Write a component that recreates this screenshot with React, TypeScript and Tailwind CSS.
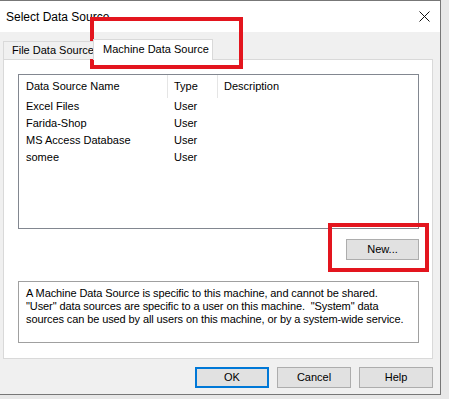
import React from "react";

const rows = [
	{ name: "Excel Files", type: "User" },
	{ name: "Farida-Shop", type: "User" },
	{ name: "MS Access Database", type: "User" },
	{ name: "somee", type: "User" },
];

const DialogButton = ({ label, primary }: { label: string; primary?: boolean }) => (
	<button
		className={
			primary
				? "w-[74px] h-[21px] bg-[#e1e1e1] border-2 border-[#0078d7] text-black leading-none"
				: "w-[74px] h-[21px] bg-[#e1e1e1] border border-[#adadad] text-black leading-none"
		}
	>
		{label}
	</button>
);

export default function App() {
	return (
		<div className="w-[449px] h-[399px] bg-[#e8e8e8] overflow-hidden font-['Liberation_Sans',Arial,sans-serif] text-[11px] text-black whitespace-nowrap">
			<div className="relative w-[441px] h-[395px] bg-[#f0f0f0] border-t border-r border-b border-[#777777] flex flex-col">
				{/* Title bar */}
				<div className="h-[31px] bg-white flex items-center justify-between pl-[6px] pr-[9px]">
					<span className="text-[12px]">Select Data Source</span>
					<svg width="11" height="11" viewBox="0 0 11 11" className="mr-[1px]">
						<path d="M0.5 0.5 L10.5 10.5 M10.5 0.5 L0.5 10.5" stroke="#111" strokeWidth="1" />
					</svg>
				</div>

				{/* Body */}
				<div className="flex-1 flex flex-col pl-[3px] pr-[7px] pt-[6px]">
					{/* Tabs */}
					<div className="flex items-end h-[21px] relative z-10">
						<div className="w-[90px] h-[18px] bg-[#f0f0f0] border-t border-l border-[#d9d9d9] flex items-center pl-[8px]">
							File Data Source
						</div>
						<div className="w-[120px] h-[21px] bg-white border-t border-l border-r border-[#d9d9d9] flex items-center pl-[9px] -mb-px pb-[2px]">
							Machine Data Source
						</div>
					</div>

					{/* Tab panel */}
					<div className="w-[430px] h-[300px] bg-white border border-[#d9d9d9] flex flex-col pl-[14px] pt-[14px]">
						{/* List view */}
						<div className="w-[401px] h-[155px] border border-[#828790] bg-white flex flex-col">
							<div className="flex h-[23px] items-center">
								<div className="w-[149px] h-full flex items-center pl-[7px] border-r border-[#e5e5e5]">
									Data Source Name
								</div>
								<div className="w-[50px] h-full flex items-center pl-[6px] border-r border-[#e5e5e5]">
									Type
								</div>
								<div className="flex-1 h-full flex items-center pl-[6px]">Description</div>
							</div>
							{rows.map((r) => (
								<div key={r.name} className="flex h-[17px] items-center">
									<div className="w-[149px] pl-[7px]">{r.name}</div>
									<div className="w-[50px] pl-[6px]">{r.type}</div>
								</div>
							))}
						</div>

						<div className="w-[401px] flex justify-end mt-[10px]">
							<button className="w-[73px] h-[21px] bg-[#e1e1e1] border border-[#adadad] leading-none">
								New...
							</button>
						</div>

						{/* Description */}
						<div className="w-[401px] h-[62px] mt-[21px] border border-[#a0a0a0] bg-white pl-[7px] pt-[5px] leading-[13px] tracking-[-0.1px]">
							<div>A Machine Data Source is specific to this machine, and cannot be shared.</div>
							<div>"User" data sources are specific to a user on this machine. &nbsp;"System" data</div>
							<div>sources can be used by all users on this machine, or by a system-wide service.</div>
						</div>
					</div>

					{/* Dialog buttons */}
					<div className="w-[430px] flex justify-end gap-[8px] mt-[8px]">
						<DialogButton label="OK" primary />
						<DialogButton label="Cancel" />
						<DialogButton label="Help" />
					</div>
				</div>

				{/* Red annotation boxes */}
				<div className="absolute left-[90px] top-[16px] w-[153px] h-[52px] border-[4px] border-[#e3151e] pointer-events-none" />
				<div className="absolute left-[328px] top-[222px] w-[101px] h-[49px] border-[4px] border-[#e3151e] pointer-events-none" />
			</div>
		</div>
	);
}
